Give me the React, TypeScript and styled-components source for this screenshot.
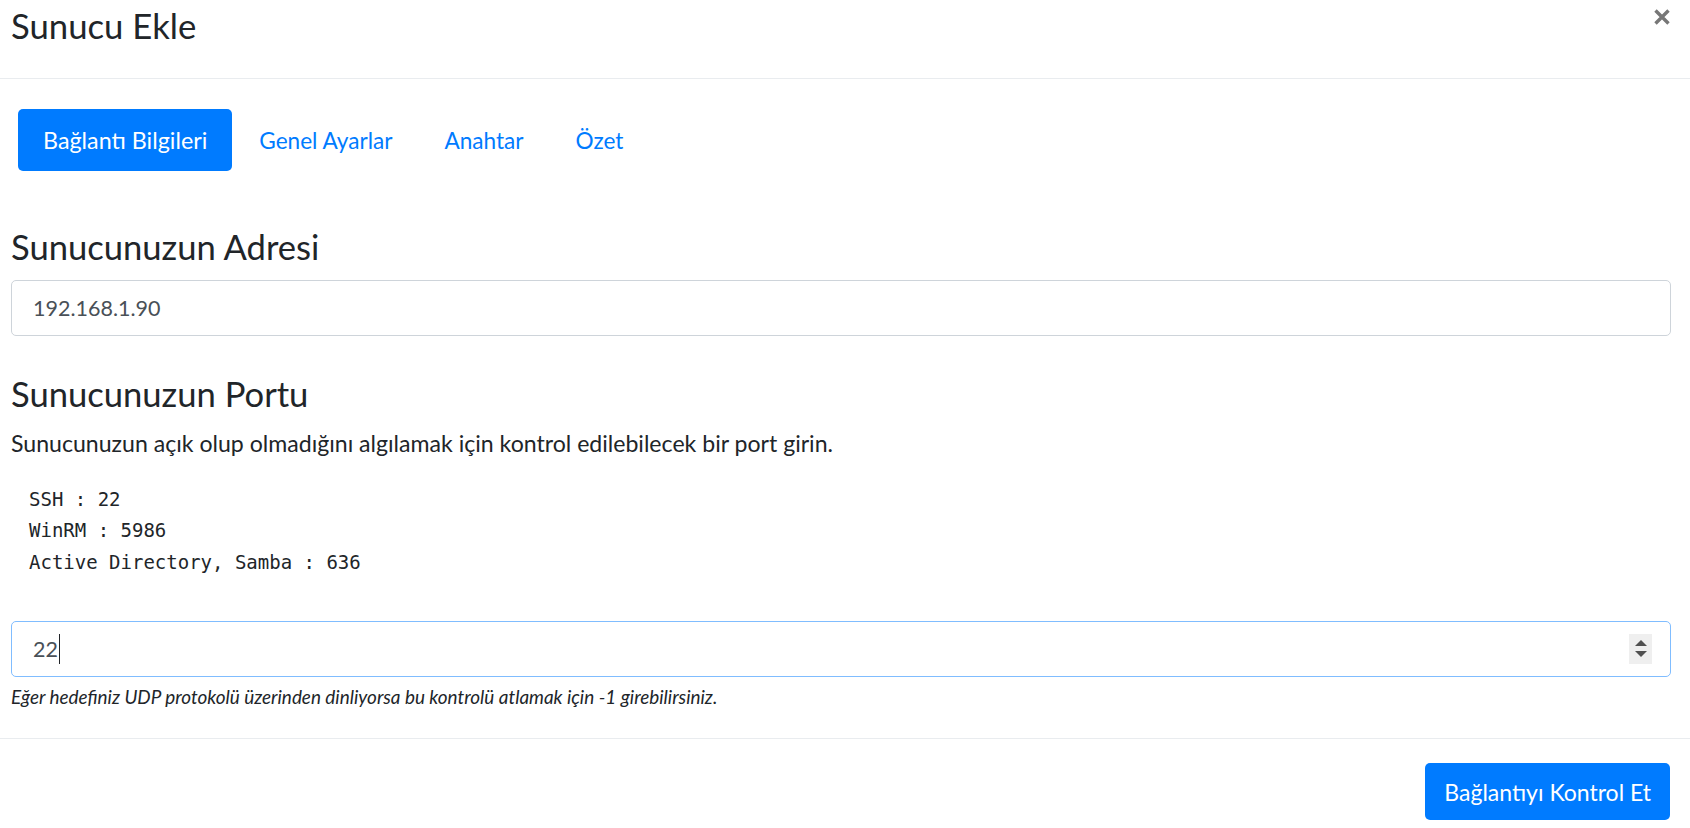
import React from "react";
import styled, { createGlobalStyle } from "styled-components";

const GlobalStyle = createGlobalStyle`
  html, body {
    margin: 0;
    padding: 0;
    background: #ffffff;
  }
  body {
    font-family: "Source Sans Pro", Lato, "Liberation Sans", sans-serif;
    color: #212529;
  }
  * {
    box-sizing: border-box;
  }
`;

const Modal = styled.div`
  width: 100%;
  height: 828px;
  display: flex;
  flex-direction: column;
`;

const Header = styled.div`
  height: 79px;
  display: flex;
  justify-content: space-between;
  align-items: flex-start;
  padding: 4px 20px 0 11px;
  border-bottom: 1px solid #e9ecef;
`;

const Title = styled.h3`
  margin: 0;
  font-size: 34.7px;
  font-weight: 400;
  line-height: 44px;
`;

const CloseButton = styled.button`
  border: none;
  background: none;
  padding: 0;
  margin-top: 5px;
  cursor: pointer;
  color: #777777;
  display: flex;
`;

const Body = styled.div`
  padding: 30px 19px 0 11px;
  flex: 1;
`;

const Tabs = styled.nav`
  display: flex;
  gap: 2px;
  padding-left: 7px;
`;

const Tab = styled.a<{ $active?: boolean }>`
  display: flex;
  align-items: center;
  height: 62px;
  padding: 0 25px;
  border-radius: 5px;
  font-size: ${(p) => (p.$active ? "23.3px" : "22.6px")};
  text-decoration: none;
  cursor: pointer;
  color: ${(p) => (p.$active ? "#ffffff" : "#007bff")};
  background: ${(p) => (p.$active ? "#007bff" : "transparent")};
`;

const SectionTitle = styled.h3<{ $top: number }>`
  margin: ${(p) => p.$top}px 0 0;
  font-size: 34.6px;
  font-weight: 400;
  line-height: 42px;
`;

const Field = styled.div<{ $focused?: boolean; $top: number }>`
  position: relative;
  margin-top: ${(p) => p.$top}px;
  height: 56px;
  display: flex;
  align-items: center;
  padding: 0 21px;
  border: 1px solid ${(p) => (p.$focused ? "#80bdff" : "#ced4da")};
  border-radius: 5px;
  font-size: 21.5px;
  color: #495057;
`;

const Caret = styled.span`
  display: inline-block;
  width: 1px;
  height: 30px;
  background: #212529;
  margin-left: 1px;
`;

const Spinner = styled.div`
  position: absolute;
  right: 18px;
  top: 12px;
  width: 23px;
  height: 30px;
  background: #efefef;
  display: flex;
  flex-direction: column;
  align-items: center;
  justify-content: center;
  gap: 5px;
`;

const Arrow = styled.span<{ $down?: boolean }>`
  width: 0;
  height: 0;
  border-left: 6px solid transparent;
  border-right: 6px solid transparent;
  ${(p) =>
    p.$down
      ? "border-top: 6px solid #505050;"
      : "border-bottom: 6px solid #505050;"}
`;

const Description = styled.p`
  margin: 13px 0 0;
  font-size: 23.1px;
  line-height: 30px;
`;

const Pre = styled.pre`
  margin: 26px 0 0;
  padding-left: 18px;
  font-family: "DejaVu Sans Mono", "Liberation Mono", monospace;
  font-size: 19px;
  line-height: 31.3px;
  color: #212529;
`;

const HelpText = styled.small`
  display: block;
  margin-top: 8px;
  font-size: 18.9px;
  font-style: italic;
  line-height: 24px;
  color: #212529;
`;

const Footer = styled.div`
  border-top: 1px solid #e9ecef;
  height: 90px;
  display: flex;
  justify-content: flex-end;
  align-items: flex-start;
  padding: 24px 20px 0;
`;

const PrimaryButton = styled.button`
  height: 57px;
  padding: 0 19px;
  border: none;
  border-radius: 5px;
  background: #007bff;
  color: #ffffff;
  font-family: "Source Sans Pro", Lato, "Liberation Sans", sans-serif;
  font-size: 23px;
  cursor: pointer;
`;

export default function App() {
  return (
    <>
      <GlobalStyle />
      <Modal>
        <Header>
          <Title>Sunucu Ekle</Title>
          <CloseButton aria-label="Kapat">
            <svg width="16" height="16" viewBox="0 0 16 16">
              <path
                d="M1.5 1.5 L14.5 14.5 M14.5 1.5 L1.5 14.5"
                stroke="currentColor"
                strokeWidth="3.4"
                strokeLinecap="butt"
              />
            </svg>
          </CloseButton>
        </Header>
        <Body>
          <Tabs>
            <Tab $active>Bağlantı Bilgileri</Tab>
            <Tab>Genel Ayarlar</Tab>
            <Tab>Anahtar</Tab>
            <Tab>Özet</Tab>
          </Tabs>

          <SectionTitle $top={55}>Sunucunuzun Adresi</SectionTitle>
          <Field $top={12}>192.168.1.90</Field>

          <SectionTitle $top={37}>Sunucunuzun Portu</SectionTitle>
          <Description>
            Sunucunuzun açık olup olmadığını algılamak için kontrol edilebilecek bir port girin.
          </Description>
          <Pre>{`SSH : 22
WinRM : 5986
Active Directory, Samba : 636`}</Pre>

          <Field $focused $top={43}>
            22
            <Caret />
            <Spinner>
              <Arrow />
              <Arrow $down />
            </Spinner>
          </Field>
          <HelpText>
            Eğer hedefiniz UDP protokolü üzerinden dinliyorsa bu kontrolü atlamak için -1 girebilirsiniz.
          </HelpText>
        </Body>
        <Footer>
          <PrimaryButton>Bağlantıyı Kontrol Et</PrimaryButton>
        </Footer>
      </Modal>
    </>
  );
}
